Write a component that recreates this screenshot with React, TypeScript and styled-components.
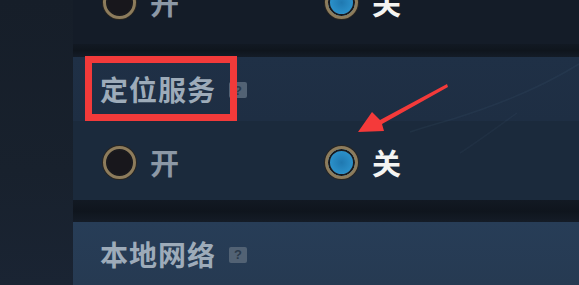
import styled, { createGlobalStyle } from 'styled-components'

const GlobalStyle = createGlobalStyle`
  html, body {
    margin: 0;
    padding: 0;
    background: #161d27;
  }
  body {
    font-family: "Noto Sans CJK SC", "Noto Sans", sans-serif;
  }
`

const Page = styled.div`
  position: relative;
  display: flex;
  width: 100%;
  height: 285px;
  overflow: hidden;
  background: #161d27;
`

const LeftStrip = styled.div`
  width: 73px;
  flex-shrink: 0;
  background: linear-gradient(180deg, #161e29 0%, #18212d 60%, #1a2433 100%);
`

const Content = styled.div`
  flex: 1;
  display: flex;
  flex-direction: column;
`

const TopSection = styled.div`
  height: 44px;
  overflow: hidden;
  background: #141c28;
`

const Band = styled.div<{ $h: number }>`
  height: ${(p) => p.$h}px;
  flex-shrink: 0;
  background: linear-gradient(180deg, #121923 0%, #0f151d 50%, #141c27 100%);
`

const Section = styled.div`
  position: relative;
  display: flex;
  flex-direction: column;
  height: 143px;
  background: #1b2a3c;
  overflow: hidden;
`

const LastSection = styled.div`
  flex: 1;
  display: flex;
  flex-direction: column;
  background: linear-gradient(180deg, #273d57 0%, #263a52 100%);
`

const Header = styled.div<{ $h: number; $bg: string }>`
  height: ${(p) => p.$h}px;
  display: flex;
  align-items: center;
  padding-left: 27px;
  background: ${(p) => p.$bg};
`

const Title = styled.span`
  font-size: 28px;
  font-weight: 700;
  line-height: 1;
  letter-spacing: 1px;
  color: #9dabb9;
`

const Help = styled.span`
  display: inline-flex;
  align-items: center;
  justify-content: center;
  width: 18px;
  height: 16px;
  margin-left: 13px;
  margin-top: 2px;
  border-radius: 2px;
  background: #526274;
  color: #2b3a4b;
  font-family: "Liberation Sans", sans-serif;
  font-size: 13px;
  font-weight: 700;
`

const OptionsRow = styled.div<{ $offset: number }>`
  display: flex;
  align-items: center;
  padding-left: 30px;
  margin-top: ${(p) => p.$offset}px;
`

const Body = styled.div`
  flex: 1;
  display: flex;
  align-items: center;
  padding-top: 4px;
`

const Option = styled.div`
  width: 222px;
  display: flex;
  align-items: center;
  gap: 14px;
`

const Radio = styled.span<{ $on: boolean }>`
  box-sizing: border-box;
  width: 33px;
  height: 33px;
  border-radius: 50%;
  border: 3px solid #8d7c5c;
  box-shadow: 0 0 0 1px #2a2620, inset 0 0 0 2px #1a1a1e;
  background: ${(p) =>
    p.$on
      ? 'radial-gradient(circle, #1f78b0 0%, #2b90c9 58%, #5ec6f0 70%, #1a1c20 76%)'
      : '#18171c'};
`

const Label = styled.span<{ $on: boolean }>`
  font-size: 29px;
  font-weight: 700;
  line-height: 1;
  color: ${(p) => (p.$on ? '#f4f4f2' : '#8c98a6')};
`

const Marker = styled.div`
  position: absolute;
  left: 85px;
  top: 56px;
  width: 152px;
  height: 65px;
  box-sizing: border-box;
  border: 7px solid #f23a3a;
  pointer-events: none;
`

const Overlay = styled.svg`
  position: absolute;
  left: 0;
  top: 0;
  pointer-events: none;
`

const Options = ({ on }: { on: 'open' | 'close' }) => (
  <>
    <Option>
      <Radio $on={on === 'open'} />
      <Label $on={on === 'open'}>开</Label>
    </Option>
    <Option>
      <Radio $on={on === 'close'} />
      <Label $on={on === 'close'}>关</Label>
    </Option>
  </>
)

export default function App() {
  return (
    <>
      <GlobalStyle />
      <Page>
        <LeftStrip />
        <Content>
          <TopSection>
            <OptionsRow $offset={-14}>
              <Options on="close" />
            </OptionsRow>
          </TopSection>
          <Band $h={13} />
          <Section>
            <Header $h={64} $bg="linear-gradient(180deg, #1f3046 0%, #1e2e43 100%)">
              <Title>定位服务</Title>
              <Help>?</Help>
            </Header>
            <Body>
              <OptionsRow $offset={0}>
                <Options on="close" />
              </OptionsRow>
            </Body>
          </Section>
          <Band $h={22} />
          <LastSection>
            <Header $h={63} $bg="transparent">
              <Title>本地网络</Title>
              <Help>?</Help>
            </Header>
          </LastSection>
        </Content>
        <Overlay width="579" height="285" viewBox="0 0 579 285">
          <path
            d="M579 64 C 550 82, 520 96, 480 110 S 440 122, 410 132"
            fill="none"
            stroke="rgba(120,150,185,0.07)"
            strokeWidth="1.5"
          />
          <path
            d="M517 113 C 500 125, 480 140, 460 153"
            fill="none"
            stroke="rgba(120,150,185,0.06)"
            strokeWidth="1.5"
          />
          <polygon
            points="447,84 380,120 372,112 358,132 384,131 382,124 448,87"
            fill="#f43a3a"
          />
        </Overlay>
        <Marker />
      </Page>
    </>
  )
}
